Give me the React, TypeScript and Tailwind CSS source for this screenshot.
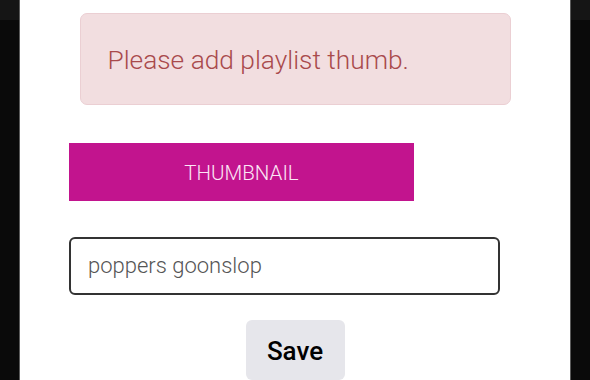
export default function App() {
  return (
    <div className="flex h-[380px] w-[590px] overflow-hidden bg-[#0a0a0a] font-['Roboto',sans-serif]">
      <div className="flex w-[19px] flex-col">
        <div className="h-[20px] bg-[#151515]" />
      </div>
      <div className="relative flex w-[552px] flex-col border-x border-[#5a5a5a] bg-white">
        <div className="mx-auto mt-[13px] flex h-[95px] w-[431px] items-center rounded-[7px] border border-[#ebcfd3] bg-[#f2dee0] pl-[27px] pt-[3px]">
          <span className="text-[26.3px] font-light text-[#a94a4c]">Please add playlist thumb.</span>
        </div>

        <button className="ml-[49px] mt-[38px] flex h-[60px] w-[345px] items-center justify-center bg-[#c2148e] pt-[2px] text-[20.5px] font-light text-[#fce6f5]">
          THUMBNAIL
        </button>

        <div className="ml-[49px] mt-[36px] flex h-[60px] w-[431px] items-center rounded-[6px] border-2 border-[#333] px-[17px]">
          <span className="text-[22px] font-light text-[#555]">poppers goonslop</span>
        </div>

        <div className="mt-[25px] flex justify-center">
          <button className="flex h-[60px] w-[99px] items-start justify-center rounded-[6px] bg-[#e6e6eb] pt-[12px] text-[26px] font-medium text-black">
            Save
          </button>
        </div>
      </div>
      <div className="flex flex-1 flex-col">
        <div className="h-[20px] bg-[#151515]" />
      </div>
    </div>
  );
}
